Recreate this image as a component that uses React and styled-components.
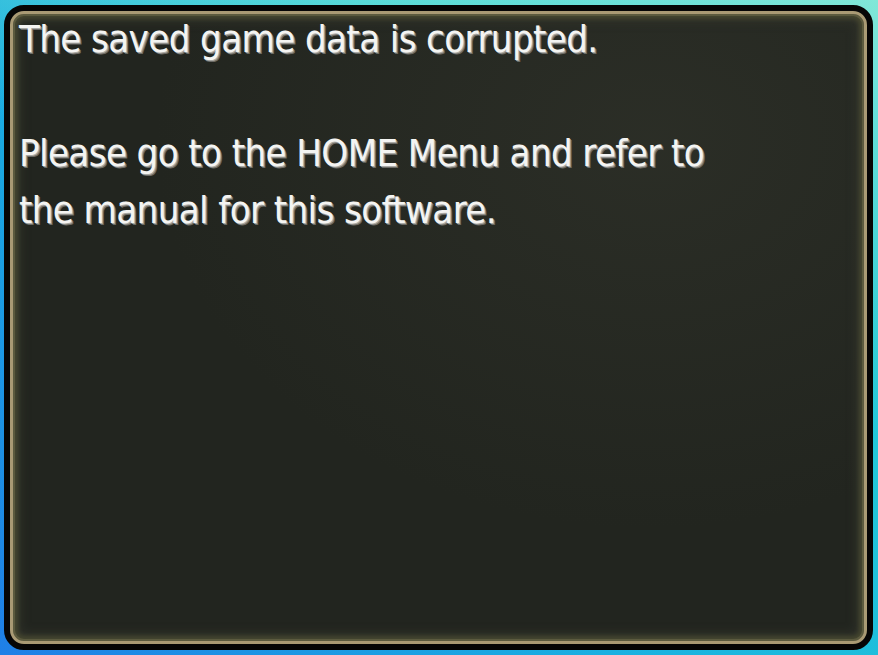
import styled, { createGlobalStyle } from "styled-components"

const Global = createGlobalStyle`
html, body {
  margin: 0;
  padding: 0;
}
body {
  width: 878px;
  height: 655px;
  overflow: hidden;
}
`

const Screen = styled.section`
width: 878px;
height: 655px;
box-sizing: border-box;
padding: 5px 5px 5px 4px;
display: flex;
background:
  linear-gradient(200deg, rgba(140,235,215,0.9) 0%, rgba(140,235,215,0) 45%),
  linear-gradient(45deg, #1f7fe6 0%, #1ab0e0 40%, #22c8d8 70%, #17c6dc 100%);
`

const Frame = styled.div`
flex: 1;
display: flex;
border: 6px solid #060606;
border-radius: 20px;
background: #060606;
`

const Panel = styled.div`
flex: 1;
display: flex;
flex-direction: column;
border: 3px solid #a99a74;
border-radius: 14px;
padding: 0 10px 10px 6px;
background:
  radial-gradient(ellipse at 75% 20%, rgba(60,62,52,0.35) 0%, rgba(0,0,0,0) 55%),
  #22251f;
box-shadow:
  inset 0 0 0 2px #5b5a3e,
  inset 0 0 4px 5px #45462f,
  inset 0 0 10px 8px #30322a;
`

const TextBlock = styled.div`
margin-top: -3px;
display: flex;
flex-direction: column;
`

const Message = styled.p`
margin: 0;
font-family: "Liberation Sans Narrow", "DejaVu Sans Condensed", "Liberation Sans", sans-serif;
font-size: 38px;
line-height: 57px;
color: #f4f4f2;
letter-spacing: -0.6px;
text-shadow: 1px 1px 0 #a8a8a4, 2px 2px 0 #6c6c68;
`

const Gap = styled.div`
height: ${p => p.h}px;
`

export default function App() {
  return (
    <>
      <Global />
      <Screen>
        <Frame>
          <Panel>
            <TextBlock>
              <Message>The saved game data is corrupted.</Message>
              <Gap h={57} />
              <Message>
                Please go to the HOME Menu and refer to
                <br />
                the manual for this software.
              </Message>
            </TextBlock>
          </Panel>
        </Frame>
      </Screen>
    </>
  )
}
